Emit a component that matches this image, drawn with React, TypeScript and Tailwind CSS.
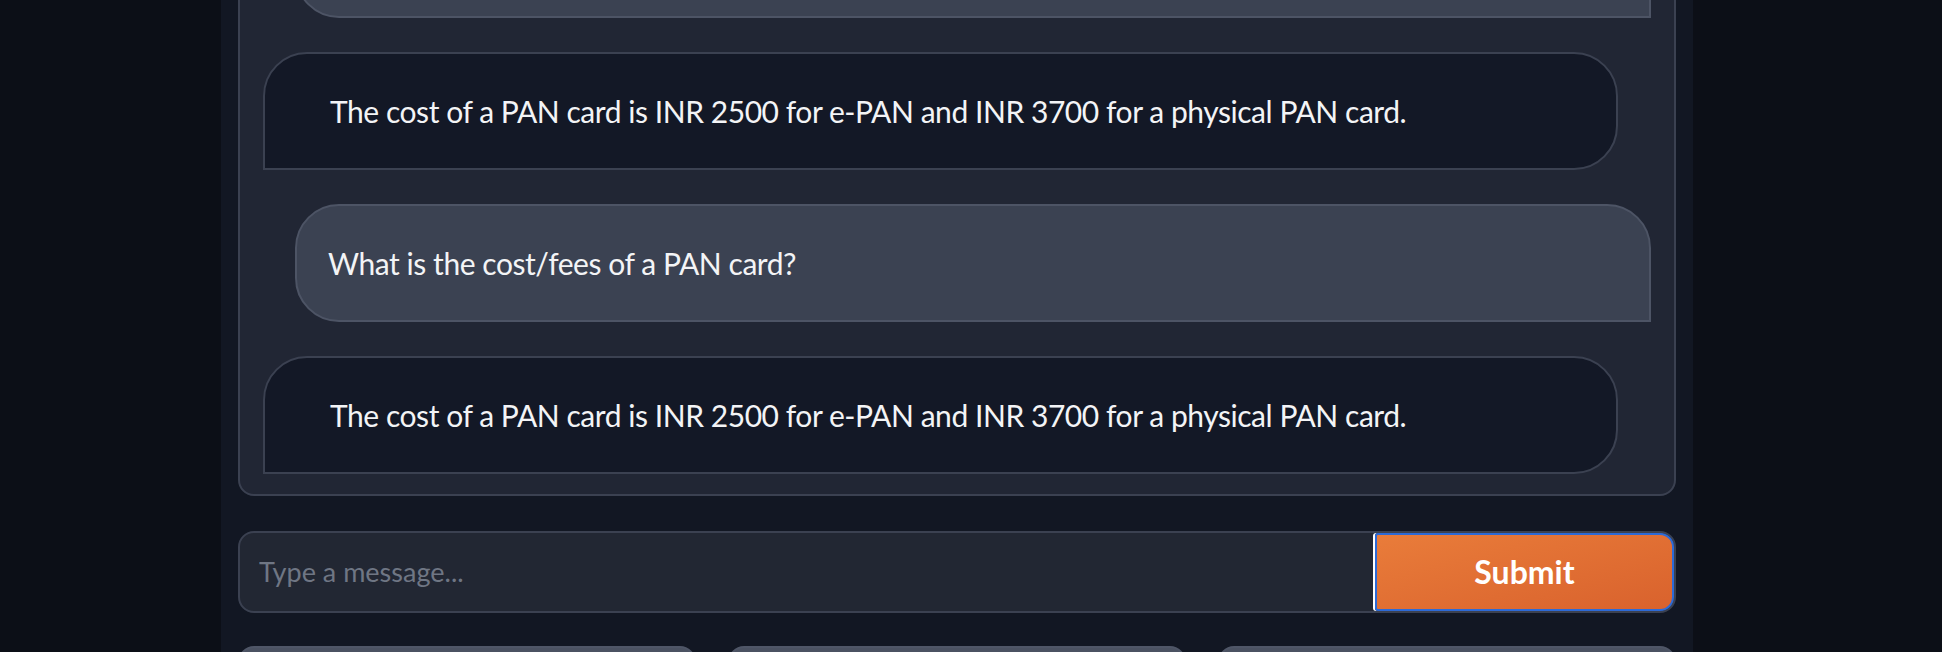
const answer =
  "The cost of a PAN card is INR 2500 for e-PAN and INR 3700 for a physical PAN card.";
const question = "What is the cost/fees of a PAN card?";

const messages = [
  { role: "user", text: question },
  { role: "bot", text: answer },
  { role: "user", text: question },
  { role: "bot", text: answer },
];

export default function App() {
  return (
    <div
      className="h-[652px] overflow-hidden bg-[#0c0f17] pl-[221px]"
      style={{ fontFamily: "Lato, 'Noto Sans', sans-serif" }}
    >
      <div className="flex h-[652px] w-[1472px] flex-col bg-[#121723] px-[17px]">
        {/* chat log, scrolled to the bottom */}
        <div className="-mt-[20px] flex h-[516px] shrink-0 flex-col justify-end gap-[34px] overflow-hidden rounded-[16px] border-2 border-[#3b4151] bg-[#212634] px-[23px] pb-[20px]">
          {messages.map((m, i) =>
            m.role === "user" ? (
              <div
                key={i}
                className="flex h-[118px] w-[1356px] shrink-0 items-center self-end rounded-[44px] rounded-br-none border-2 border-[#4d5465] bg-[#3b4252] pl-[31px] text-[30px] tracking-[-0.45px] text-[#f3f4f6]"
              >
                {m.text}
              </div>
            ) : (
              <div
                key={i}
                className="flex h-[118px] w-[1355px] shrink-0 items-center self-start rounded-[44px] rounded-bl-none border-2 border-[#3b4151] bg-[#131826] pl-[65px] text-[30px] tracking-[-0.45px] text-[#f3f4f6]"
              >
                {m.text}
              </div>
            )
          )}
        </div>

        {/* input row */}
        <div className="mt-[35px] flex h-[82px] shrink-0 rounded-[16px] border-2 border-[#3b4151] bg-[#222733]">
          <input
            type="text"
            placeholder="Type a message..."
            className="min-w-0 flex-1 rounded-l-[14px] bg-transparent pl-[19px] text-[27px] text-[#f3f4f6] outline-none placeholder:text-[#6f7684]"
          />
          <button className="ml-[2px] h-full w-[299px] rounded-l-[3px] rounded-r-[14px] border-2 border-[#2d6ad6] bg-gradient-to-br from-[#e97c3a] to-[#d9622d] text-[32px] font-bold text-white shadow-[-2px_0_0_0_#ffffff]">
            Submit
          </button>
        </div>

        {/* action buttons, cut off by the window */}
        <div className="mt-[33px] grid shrink-0 grid-cols-3 gap-[32px]">
          <button className="h-[80px] rounded-[16px] border-2 border-[#4f5667] bg-[#4b5262]" />
          <button className="h-[80px] rounded-[16px] border-2 border-[#4f5667] bg-[#4b5262]" />
          <button className="h-[80px] rounded-[16px] border-2 border-[#4f5667] bg-[#4b5262]" />
        </div>
      </div>
    </div>
  );
}
